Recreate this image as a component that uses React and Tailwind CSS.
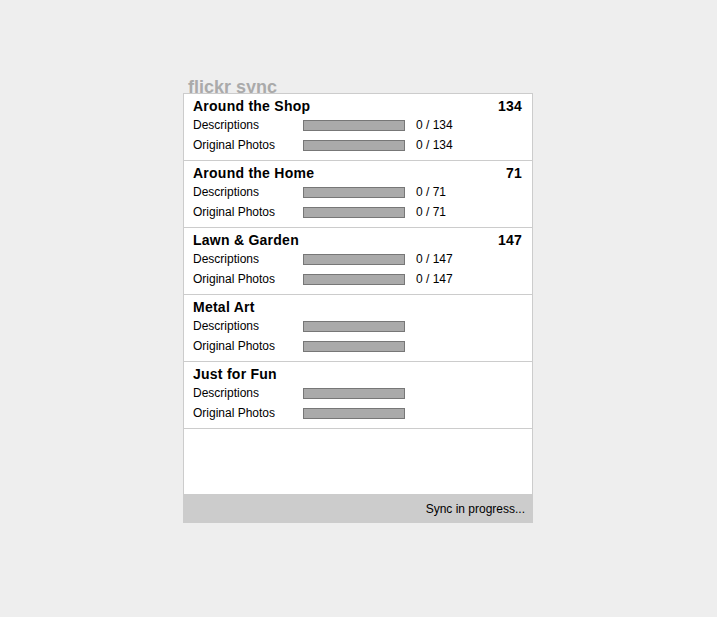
const albums = [
  { name: "Around the Shop", total: 134 },
  { name: "Around the Home", total: 71 },
  { name: "Lawn & Garden", total: 147 },
  { name: "Metal Art", total: null },
  { name: "Just for Fun", total: null },
];

function ProgressRow({ label, total }) {
  return (
    <div className="flex h-[20px] items-center">
      <div className="w-[110px] text-[12px]">{label}</div>
      <div className="h-[11px] w-[102px] border border-[#777777] bg-[#aaaaaa]" />
      {total !== null && <div className="ml-[11px] text-[12px]">0 / {total}</div>}
    </div>
  );
}

export default function App() {
  return (
    <div
      className="h-[617px] w-full bg-[#eeeeee] pt-[78px] text-black"
      style={{ fontFamily: '"Liberation Sans", Arial, sans-serif' }}
    >
      <div className="ml-[183px] w-[350px]">
        <div className="-mb-[3px] h-[18px] pl-[5px] text-[18px] font-bold leading-[18px] text-[#aaaaaa]">
          flickr sync
        </div>
        <div className="relative bg-[#cccccc] px-px pt-px">
          <div className="h-[400px] bg-white">
            {albums.map((a) => (
              <div key={a.name} className="border-b border-[#cccccc] pb-[5px] pl-[9px] pr-[10px] pt-[3px]">
                <div className="flex h-[18px] items-center justify-between text-[14px] font-bold tracking-[0.25px]">
                  <span>{a.name}</span>
                  {a.total !== null && <span>{a.total}</span>}
                </div>
                <ProgressRow label="Descriptions" total={a.total} />
                <ProgressRow label="Original Photos" total={a.total} />
              </div>
            ))}
          </div>
          <div className="flex h-[29px] items-center justify-end pr-[7px] text-[12px]">
            Sync in progress...
          </div>
        </div>
      </div>
    </div>
  );
}
